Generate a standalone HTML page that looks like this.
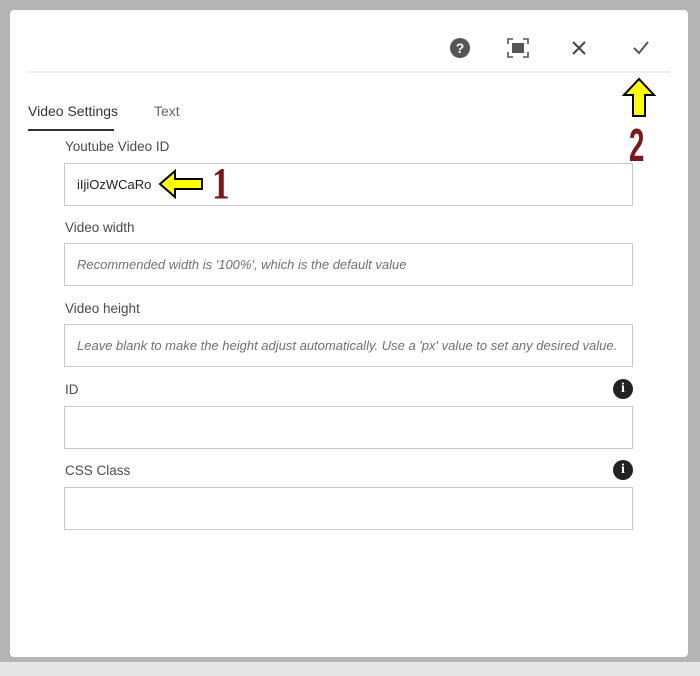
<!DOCTYPE html>
<html><head><style>
body{margin:0;width:700px;height:676px;background:#e6e6e6;position:relative;overflow:hidden;font-family:"Liberation Sans",sans-serif}
.bg{position:absolute;left:0;top:0;width:700px;height:662px;background:#b4b4b4}
.dlg{position:absolute;left:10px;top:10px;width:678px;height:647px;background:#fff;border-radius:4px}
.hr{position:absolute;left:28px;top:71px;width:642px;height:2px;background:#eee}
.lbl{position:absolute;left:65px;font-size:13.5px;color:#4b4b4b}
.inp{position:absolute;left:64px;width:569px;height:43px;border:1px solid #c8c8c8;box-sizing:border-box;font-size:13px;color:#707070;font-style:italic;padding-left:12px;line-height:41px}
.info{position:absolute;left:613px;width:20px;height:20px;border-radius:50%;background:#222;color:#fff;font:bold 14px "Liberation Serif",serif;text-align:center;line-height:20px}
</style></head><body>
<div class="bg"></div>
<div class="dlg"></div>
<div class="hr"></div>
<div style="position:absolute;left:450px;top:38px;width:20px;height:20px;border-radius:50%;background:#555;color:#fff;font:bold 14px 'Liberation Sans';text-align:center;line-height:20px">?</div>
<svg style="position:absolute;left:507px;top:38px" width="22" height="20" viewBox="0 0 22 20"><path d="M1 6V1h5M16 1h5v5M21 14v5h-5M6 19H1v-5" fill="none" stroke="#555" stroke-width="1.6"/><rect x="5" y="5" width="12" height="10" fill="#555"/></svg>
<svg style="position:absolute;left:571px;top:40px" width="16" height="16"><path d="M2 2L14 14M14 2L2 14" stroke="#444" stroke-width="2"/></svg>
<svg style="position:absolute;left:632px;top:40px" width="18" height="16"><path d="M2 8L7 13L16 2" fill="none" stroke="#555" stroke-width="2"/></svg>
<svg style="position:absolute;left:622px;top:77px" width="34" height="42"><path d="M17 2L32 18H23V39H11V18H2Z" fill="#ffff00" stroke="#000" stroke-width="2"/></svg>
<div style="position:absolute;left:629px;top:118px;font:bold 46px 'Liberation Sans',sans-serif;color:#7a1818;transform:scaleX(.6);transform-origin:left">2</div>
<div style="position:absolute;left:28px;top:103px;font-size:14px;color:#333">Video Settings</div>
<div style="position:absolute;left:28px;top:129px;width:86px;height:2px;background:#333"></div>
<div style="position:absolute;left:154px;top:103px;font-size:14px;color:#666">Text</div>
<div class="lbl" style="top:139px">Youtube Video ID</div>
<div class="inp" style="top:163px;font-style:normal;color:#222">iIjiOzWCaRo</div>
<svg style="position:absolute;left:158px;top:169px" width="46" height="30"><path d="M2 15L17 2V10H44V20H17V28Z" fill="#ffff00" stroke="#000" stroke-width="2"/></svg>
<div style="position:absolute;left:212px;top:158px;font:bold 44px 'Liberation Serif',serif;color:#7a1818;transform:scaleX(.8);transform-origin:left">1</div>
<div class="lbl" style="top:220px">Video width</div>
<div class="inp" style="top:243px">Recommended width is '100%', which is the default value</div>
<div class="lbl" style="top:301px">Video height</div>
<div class="inp" style="top:324px">Leave blank to make the height adjust automatically. Use a 'px' value to set any desired value.</div>
<div class="lbl" style="top:382px">ID</div>
<div class="info" style="top:379px">i</div>
<div class="inp" style="top:406px"></div>
<div class="lbl" style="top:463px">CSS Class</div>
<div class="info" style="top:460px">i</div>
<div class="inp" style="top:487px"></div>
</body></html>
